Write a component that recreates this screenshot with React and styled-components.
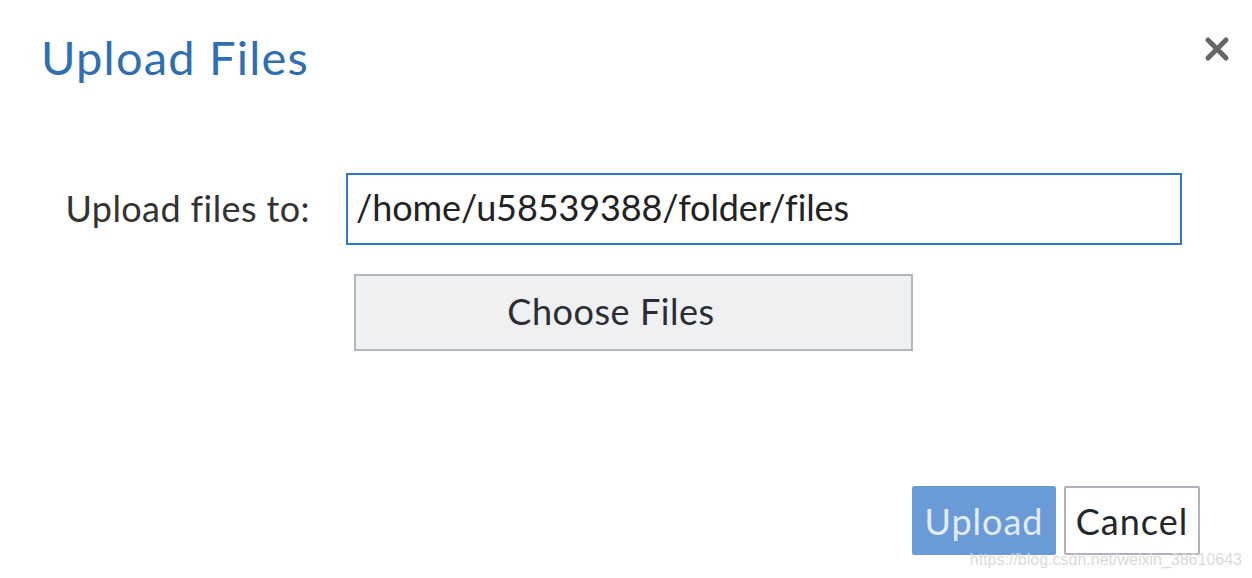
import React from "react";
import styled, { createGlobalStyle } from "styled-components";

const Global = createGlobalStyle`
  html, body { margin: 0; padding: 0; background: #ffffff; }
  body { font-family: "Lato", "Open Sans", sans-serif; }
  * { box-sizing: border-box; font-variant-ligatures: none; }
`;

const Dialog = styled.div`
  position: relative;
  width: 1252px;
  height: 578px;
  background: #fff;
  display: flex;
  flex-direction: column;
  overflow: hidden;
`;

const Header = styled.div`
  display: flex;
  justify-content: space-between;
  align-items: flex-start;
  padding: 30px 20px 0 41px;
`;

const Title = styled.h1`
  margin: 0;
  font-family: "Lato", sans-serif;
  font-weight: 400;
  font-size: 47px;
  line-height: 54px;
  color: #2f6fb1;
  letter-spacing: 1.2px;
`;

const CloseButton = styled.button`
  border: 0;
  background: transparent;
  padding: 0;
  margin-top: 4px;
  width: 30px;
  height: 30px;
  display: flex;
  align-items: center;
  justify-content: center;
  cursor: pointer;
`;

const Form = styled.div`
  display: grid;
  grid-template-columns: 310px 836px;
  column-gap: 36px;
  row-gap: 29px;
  margin-top: 89px;
  align-items: center;
`;

const Label = styled.label`
  text-align: right;
  font-size: 36px;
  letter-spacing: 0.4px;
  color: #333;
  font-family: "Lato", sans-serif;
  padding-bottom: 2px;
`;

const PathInput = styled.input`
  width: 836px;
  height: 72px;
  border: 2px solid #2f77c6;
  border-radius: 0;
  padding: 0 8px 4px 8px;
  font-family: "Lato", sans-serif;
  font-size: 36px;
  letter-spacing: -0.1px;
  color: #222;
  outline: none;
  background: #fff;
`;

const ChooseButton = styled.button`
  grid-column: 2;
  margin-left: 8px;
  width: 559px;
  height: 77px;
  padding: 0 45px 4px 0;
  background: #eff0f2;
  border: 2px solid #b2b6c0;
  border-radius: 0;
  font-family: "Lato", sans-serif;
  font-size: 36px;
  letter-spacing: 0.55px;
  color: #2a2d33;
  cursor: pointer;
`;

const Footer = styled.div`
  margin-top: auto;
  display: flex;
  justify-content: flex-end;
  gap: 8px;
  padding: 0 52px 23px 0;
`;

const FooterButton = styled.button`
  height: 69px;
  width: ${(p) => p.$w}px;
  padding: 0;
  border-radius: 2px;
  font-family: "Lato", sans-serif;
  font-size: 36px;
  letter-spacing: 1px;
  cursor: pointer;
  background: ${(p) => (p.$primary ? "#6a9bd7" : "#ffffff")};
  color: ${(p) => (p.$primary ? "#e3ecf7" : "#23262b")};
  border: ${(p) => (p.$primary ? "0" : "2px solid #adb2bc")};
`;

const Watermark = styled.span`
  position: absolute;
  right: 10px;
  bottom: 9px;
  font-family: "Liberation Sans", Arial, sans-serif;
  font-size: 16px;
  color: rgba(205, 205, 205, 0.75);
  text-shadow: 0 0 1px rgba(255, 255, 255, 0.6);
  pointer-events: none;
`;

export default function App() {
  return (
    <>
      <Global />
      <Dialog>
        <Header>
          <Title>Upload Files</Title>
          <CloseButton aria-label="Close">
            <svg width="26" height="26" viewBox="0 0 26 26">
              <path
                d="M4 4 L22 22 M22 4 L4 22"
                stroke="#676767"
                strokeWidth="5"
                strokeLinecap="round"
              />
            </svg>
          </CloseButton>
        </Header>
        <Form>
          <Label htmlFor="path">Upload files to:</Label>
          <PathInput id="path" defaultValue="/home/u58539388/folder/files" />
          <ChooseButton>Choose Files</ChooseButton>
        </Form>
        <Footer>
          <FooterButton $primary $w={144}>Upload</FooterButton>
          <FooterButton $w={136}>Cancel</FooterButton>
        </Footer>
        <Watermark>https://blog.csdn.net/weixin_38610643</Watermark>
      </Dialog>
    </>
  );
}
